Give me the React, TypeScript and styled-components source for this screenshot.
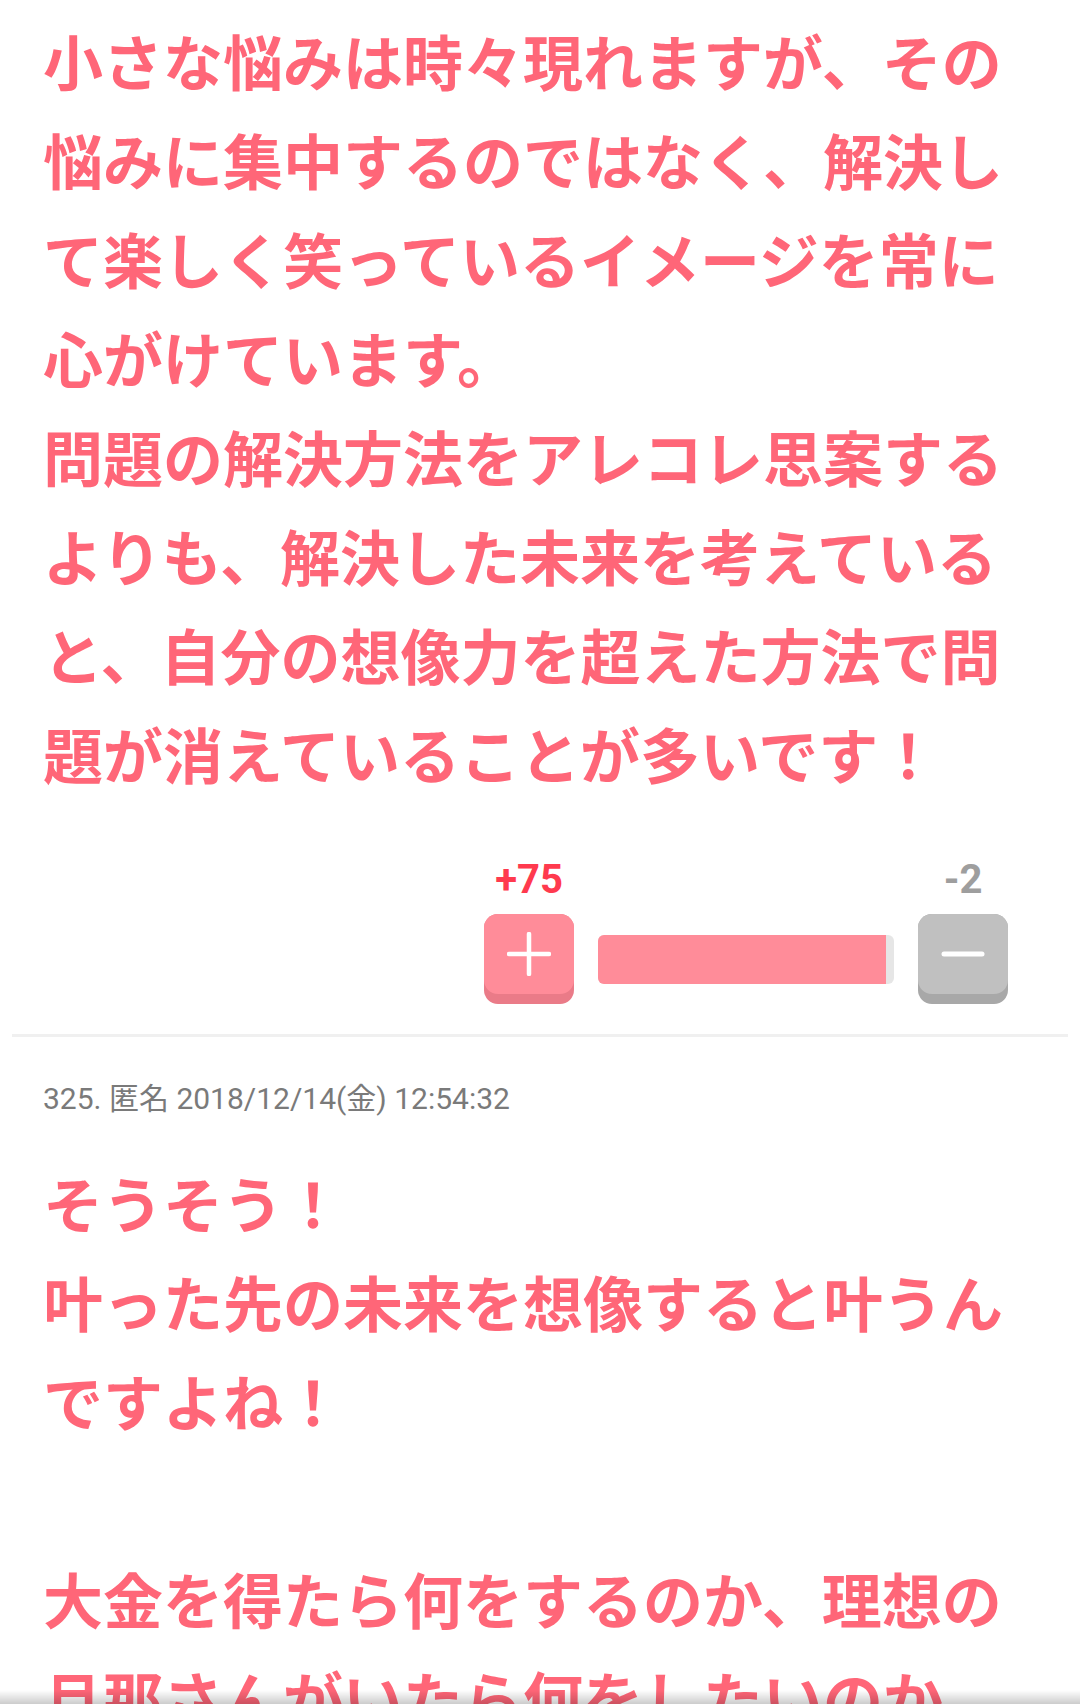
import React from 'react'
import styled, { createGlobalStyle } from 'styled-components'

const GlobalStyle = createGlobalStyle`
    html, body {
        margin: 0;
        padding: 0;
        background: #fff;
    }
    body {
        font-family: Roboto, "Noto Sans CJK JP", sans-serif;
        -webkit-font-smoothing: antialiased;
    }
`

const PINK = '#ff6678'

type Post = {
    no: number
    date: string
    lines: string[]
    plus: number
    minus: number
}

const posts: Post[] = [
    {
        no: 324,
        date: '',
        lines: [
            '小さな悩みは時々現れますが、その悩みに集中するのではなく、解決して楽しく笑っているイメージを常に心がけています。',
            '問題の解決方法をアレコレ思案するよりも、解決した未来を考えていると、自分の想像力を超えた方法で問題が消えていることが多いです！',
        ],
        plus: 75,
        minus: 2,
    },
    {
        no: 325,
        date: '2018/12/14(金) 12:54:32',
        lines: [
            'そうそう！',
            '叶った先の未来を想像すると叶うんですよね！',
            '',
            '大金を得たら何をするのか、理想の旦那さんがいたら何をしたいのか、',
        ],
        plus: 0,
        minus: 0,
    },
]

const Page = styled.div`
    padding-top: 10px;
    overflow: hidden;
`

const CommentBody = styled.div`
    padding: 0 37px 0 43px;
    font-family: "Noto Sans CJK JP", sans-serif;
    font-weight: 700;
    font-size: 60px;
    line-height: 99px;
    color: ${PINK};
    word-break: break-all;
    line-break: strict;
`

const BodyLine = styled.div`
    min-height: 99px;
`

const VoteGrid = styled.div`
    display: grid;
    grid-template-columns: 90px 296px 90px;
    column-gap: 24px;
    row-gap: 10px;
    justify-content: end;
    padding: 54px 72px 0 0;
`

const VoteCount = styled.div<{ $tone: 'plus' | 'minus' }>`
    font-family: Roboto, sans-serif;
    font-weight: 700;
    font-size: 40px;
    line-height: 48px;
    text-align: center;
    color: ${(p) => (p.$tone === 'plus' ? '#ff3a4e' : '#9e9e9e')};
`

const VoteButton = styled.button<{ $tone: 'plus' | 'minus' }>`
    width: 90px;
    height: 90px;
    border: 0;
    padding: 0;
    border-radius: 14px;
    cursor: pointer;
    background: ${(p) => (p.$tone === 'plus' ? '#ea7b88' : '#a8a8a8')};
    display: flex;
    align-items: flex-start;
`

const ButtonFace = styled.span<{ $tone: 'plus' | 'minus' }>`
    width: 100%;
    height: 80px;
    border-radius: 14px;
    background: ${(p) => (p.$tone === 'plus' ? '#ff8c99' : '#c0c0c0')};
    display: flex;
    align-items: center;
    justify-content: center;
`

const Bar = styled.div`
    align-self: center;
    height: 49px;
    border-radius: 6px;
    background: #e6e6e6;
    overflow: hidden;
    display: flex;
`

const BarFill = styled.div`
    height: 100%;
    background: #ff8c99;
`

const Separator = styled.hr`
    border: 0;
    height: 3px;
    margin: 30px 12px 0 12px;
    background: #f0f0f0;
`

const Meta = styled.div`
    padding: 44px 40px 0 43px;
    font-family: Roboto, "Noto Sans CJK JP", sans-serif;
    font-size: 30px;
    line-height: 36px;
    color: #7a7a7a;
`

const SecondBody = styled(CommentBody)`
    padding-top: 35px;
`

const BottomShade = styled.div`
    position: fixed;
    left: 0;
    right: 0;
    bottom: 0;
    height: 14px;
    background: linear-gradient(to bottom, rgba(0, 0, 0, 0), rgba(0, 0, 0, 0.2));
    pointer-events: none;
`

const PlusIcon: React.FC = () => (
    <svg width="44" height="44" viewBox="0 0 44 44">
        <path d="M22 2 V42 M2 22 H42" stroke="#fff" strokeWidth="4.5" strokeLinecap="round" />
    </svg>
)

const MinusIcon: React.FC = () => (
    <svg width="44" height="44" viewBox="0 0 44 44">
        <path d="M3 22 H41" stroke="#fff" strokeWidth="5" strokeLinecap="round" />
    </svg>
)

const Votes: React.FC<{ plus: number; minus: number }> = ({ plus, minus }) => {
    const ratio = plus + minus > 0 ? (plus / (plus + minus)) * 100 : 50
    return (
        <VoteGrid>
            <VoteCount $tone="plus">+{plus}</VoteCount>
            <div />
            <VoteCount $tone="minus">-{minus}</VoteCount>
            <VoteButton $tone="plus" aria-label="plus">
                <ButtonFace $tone="plus"><PlusIcon /></ButtonFace>
            </VoteButton>
            <Bar>
                <BarFill style={{ width: `${ratio}%` }} />
            </Bar>
            <VoteButton $tone="minus" aria-label="minus">
                <ButtonFace $tone="minus"><MinusIcon /></ButtonFace>
            </VoteButton>
        </VoteGrid>
    )
}

const App: React.FC = () => {
    const [first, second] = posts
    return (
        <>
            <GlobalStyle />
            <Page>
                <CommentBody>
                    {first.lines.map((l, i) => <BodyLine key={i}>{l}</BodyLine>)}
                </CommentBody>
                <Votes plus={first.plus} minus={first.minus} />
                <Separator />
                <Meta>{second.no}. 匿名 {second.date}</Meta>
                <SecondBody>
                    {second.lines.map((l, i) => <BodyLine key={i}>{l}</BodyLine>)}
                </SecondBody>
            </Page>
            <BottomShade />
        </>
    )
}

export default App
